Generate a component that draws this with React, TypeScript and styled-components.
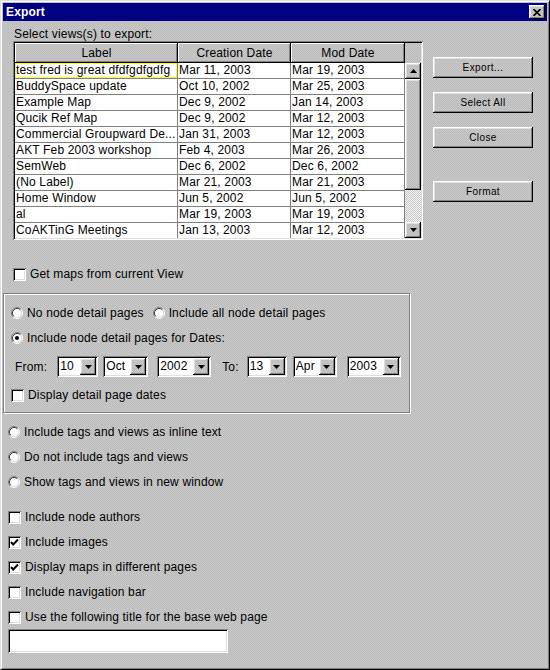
import React from "react";
import styled, { createGlobalStyle, css } from "styled-components";

const GlobalStyle = createGlobalStyle`
  html, body { margin: 0; padding: 0; background: #c0c0c0; }
  body { font-family: "Liberation Sans", Arial, sans-serif; font-size: 12px; color: #000; letter-spacing: 0.16px; }
  * { box-sizing: border-box; }
`;

const texture = css`
  background-color: #c3c3c3;
  background-image: repeating-conic-gradient(#c8c8c8 0 25%, #bcbcbc 0 50%);
  background-size: 2px 2px;
`;

const raised = css`
  box-shadow: inset -1px -1px 0 #000, inset 1px 1px 0 #fff, inset -2px -2px 0 #808080,
    inset 2px 2px 0 #dfdfdf;
`;

const sunken = css`
  box-shadow: inset 1px 1px 0 #808080, inset -1px -1px 0 #fff, inset 2px 2px 0 #000,
    inset -2px -2px 0 #dfdfdf;
`;

const Window = styled.div`
  width: 550px;
  height: 670px;
  display: flex;
  flex-direction: column;
  background: #c0c0c0;
  border: 1px solid;
  border-color: #dfdfdf #000 #000 #dfdfdf;
  box-shadow: inset 1px 1px 0 #fff, inset -1px -1px 0 #808080;
  padding: 2px;
  overflow: hidden;
`;

const TitleBar = styled.div`
  height: 18px;
  flex: none;
  background: #000080;
  color: #fff;
  font-weight: bold;
  font-size: 12px;
  display: flex;
  align-items: center;
  justify-content: space-between;
  padding: 0 2px 0 3px;
`;

const CloseButton = styled.div`
  width: 16px;
  height: 14px;
  ${texture};
  ${raised};
  display: flex;
  align-items: center;
  justify-content: center;
`;

const Body = styled.div`
  flex: 1;
  ${texture};
  display: flex;
  flex-direction: column;
  overflow: hidden;
`;

const TopArea = styled.div`
  display: flex;
  margin: 7px 0 0 10px;
`;

const LeftCol = styled.div`
  display: flex;
  flex-direction: column;
`;

const Caption = styled.div`
  height: 13px;
  line-height: 13px;
  margin-left: 1px;
  white-space: nowrap;
`;

const ScrollPane = styled.div`
  width: 410px;
  height: 199px;
  padding: 2px;
  ${sunken};
  display: grid;
  grid-template-columns: 390px 16px;
  grid-template-rows: 20px 175px;
`;

const HeaderRow = styled.div`
  display: flex;
`;

const HeaderCell = styled.div<{ $w: number }>`
  width: ${(p) => p.$w}px;
  height: 20px;
  ${texture};
  box-shadow: inset -1px -1px 0 #000, inset 1px 1px 0 #fff, inset -2px -2px 0 #808080;
  display: flex;
  align-items: center;
  justify-content: center;
  padding-bottom: 1px;
  white-space: nowrap;
`;

const Viewport = styled.div`
  grid-column: 1;
  grid-row: 2;
  background: #fff;
  overflow: hidden;
`;

const Row = styled.div`
  display: flex;
  height: 16px;
`;

const Cell = styled.div<{ $w: number; $focus?: boolean }>`
  width: ${(p) => p.$w}px;
  height: 16px;
  border-right: 1px solid #808080;
  border-bottom: 1px solid #808080;
  padding-left: 1px;
  line-height: 15px;
  white-space: nowrap;
  overflow: hidden;
  ${(p) => p.$focus && "box-shadow: inset 0 0 0 1px #ffff00;"}
`;

const ScrollBar = styled.div`
  grid-column: 2;
  grid-row: 2;
  display: flex;
  flex-direction: column;
`;

const ArrowButton = styled.div<{ $h?: number }>`
  width: 16px;
  height: ${(p) => p.$h ?? 16}px;
  flex: none;
  ${texture};
  ${raised};
  display: flex;
  align-items: center;
  justify-content: center;
`;

const Thumb = styled.div`
  height: 111px;
  flex: none;
  ${texture};
  ${raised};
`;

const Track = styled.div`
  flex: 1;
  background-color: #fff;
  background-image: repeating-conic-gradient(#c8c8c8 0 25%, #f4f4f4 0 50%);
  background-size: 2px 2px;
`;

const ButtonCol = styled.div`
  display: flex;
  flex-direction: column;
  margin-left: 10px;
  padding-top: 29px;
`;

const PushButton = styled.div<{ $mt: number }>`
  width: 100px;
  height: 21px;
  margin-top: ${(p) => p.$mt}px;
  ${texture};
  ${raised};
  display: flex;
  align-items: center;
  justify-content: center;
  font-size: 10px;
  letter-spacing: 0.4px;
  padding-bottom: 1px;
`;

const OptionRow = styled.div<{ $ml: number; $mt: number }>`
  display: flex;
  align-items: center;
  height: 16px;
  margin-left: ${(p) => p.$ml}px;
  margin-top: ${(p) => p.$mt}px;
  white-space: nowrap;
`;

const Option = styled.label<{ $ml?: number }>`
  display: flex;
  align-items: center;
  gap: 4px;
  margin-left: ${(p) => p.$ml ?? 0}px;
`;

const CheckBox = styled.span`
  width: 13px;
  height: 13px;
  flex: none;
  background: #fff;
  ${sunken};
  display: flex;
  align-items: center;
  justify-content: center;
`;

const GroupBox = styled.div`
  margin-top: 11px;
  width: 407px;
  height: 120px;
  flex: none;
  border: 1px solid #808080;
  box-shadow: 1px 1px 0 #fff, inset 1px 1px 0 #fff;
  padding: 11px 0 0 7px;
  display: flex;
  flex-direction: column;
`;

const DateRow = styled.div`
  display: flex;
  align-items: center;
  height: 21px;
  margin-top: 10px;
  white-space: nowrap;
`;

const DateLabel = styled.span<{ $ml: number }>`
  margin-left: ${(p) => p.$ml}px;
`;

const Combo = styled.div<{ $w: number; $ml: number }>`
  width: ${(p) => p.$w}px;
  height: 21px;
  margin-left: ${(p) => p.$ml}px;
  background: #fff;
  ${sunken};
  padding: 2px;
  display: flex;
`;

const ComboText = styled.span`
  flex: 1;
  line-height: 17px;
  padding-left: 1px;
`;

const TextField = styled.div`
  width: 220px;
  height: 24px;
  margin: 4px 0 0 5px;
  background: #fff;
  ${sunken};
`;

const Radio: React.FC<{ on?: boolean }> = ({ on }) => (
  <svg width="12" height="12" viewBox="0 0 12 12" style={{ flex: "none" }}>
    <circle cx="6" cy="6" r="4.5" fill="#fff" />
    <path d="M2.11 9.89 A5.5 5.5 0 0 1 9.89 2.11" stroke="#808080" fill="none" />
    <path d="M9.89 2.11 A5.5 5.5 0 0 1 2.11 9.89" stroke="#fff" fill="none" />
    <path d="M2.82 9.18 A4.5 4.5 0 0 1 9.18 2.82" stroke="#404040" fill="none" />
    <path d="M9.18 2.82 A4.5 4.5 0 0 1 2.82 9.18" stroke="#dfdfdf" fill="none" />
    {on && <circle cx="6" cy="6" r="2" fill="#000" />}
  </svg>
);

const Check: React.FC<{ on?: boolean }> = ({ on }) => (
  <CheckBox>
    {on && (
      <svg width="9" height="9" viewBox="0 0 9 9">
        <polyline points="1,4 3.2,6.5 8,1.5" stroke="#000" strokeWidth="1.9" fill="none" />
      </svg>
    )}
  </CheckBox>
);

const TriDown = () => (
  <svg width="7" height="4" viewBox="0 0 7 4">
    <polygon points="0,0 7,0 3.5,4" fill="#000" />
  </svg>
);

const TriUp = () => (
  <svg width="7" height="4" viewBox="0 0 7 4">
    <polygon points="0,4 7,4 3.5,0" fill="#000" />
  </svg>
);

const DateCombo: React.FC<{ value: string; w: number; ml: number }> = ({ value, w, ml }) => (
  <Combo $w={w} $ml={ml}>
    <ComboText>{value}</ComboText>
    <ArrowButton $h={17}>
      <TriDown />
    </ArrowButton>
  </Combo>
);

const rows: [string, string, string][] = [
  ["test fred is great dfdfgdfgdfg", "Mar 11, 2003", "Mar 19, 2003"],
  ["BuddySpace update", "Oct 10, 2002", "Mar 25, 2003"],
  ["Example Map", "Dec 9, 2002", "Jan 14, 2003"],
  ["Qucik Ref Map", "Dec 9, 2002", "Mar 12, 2003"],
  ["Commercial Groupward De...", "Jan 31, 2003", "Mar 12, 2003"],
  ["AKT Feb 2003 workshop", "Feb 4, 2003", "Mar 26, 2003"],
  ["SemWeb", "Dec 6, 2002", "Dec 6, 2002"],
  ["(No Label)", "Mar 21, 2003", "Mar 21, 2003"],
  ["Home Window", "Jun 5, 2002", "Jun 5, 2002"],
  ["al", "Mar 19, 2003", "Mar 19, 2003"],
  ["CoAKTinG Meetings", "Jan 13, 2003", "Mar 12, 2003"],
];

const colW = [163, 113, 114];

export default function App() {
  return (
    <>
      <GlobalStyle />
      <Window>
        <TitleBar>
          <span>Export</span>
          <CloseButton>
            <svg width="8" height="7" viewBox="0 0 8 7">
              <path d="M0.5 0 L7.5 7 M7.5 0 L0.5 7" stroke="#000" strokeWidth="1.6" />
            </svg>
          </CloseButton>
        </TitleBar>
        <Body>
          <TopArea>
            <LeftCol>
              <Caption>Select views(s) to export:</Caption>
              <ScrollPane>
                <HeaderRow>
                  <HeaderCell $w={colW[0]}>Label</HeaderCell>
                  <HeaderCell $w={colW[1]}>Creation Date</HeaderCell>
                  <HeaderCell $w={colW[2]}>Mod Date</HeaderCell>
                </HeaderRow>
                <div />
                <Viewport>
                  {rows.map((r, i) => (
                    <Row key={i}>
                      <Cell $w={colW[0]} $focus={i === 0}>{r[0]}</Cell>
                      <Cell $w={colW[1]}>{r[1]}</Cell>
                      <Cell $w={colW[2]}>{r[2]}</Cell>
                    </Row>
                  ))}
                </Viewport>
                <ScrollBar>
                  <ArrowButton>
                    <TriUp />
                  </ArrowButton>
                  <Thumb />
                  <Track />
                  <ArrowButton>
                    <TriDown />
                  </ArrowButton>
                </ScrollBar>
              </ScrollPane>
            </LeftCol>
            <ButtonCol>
              <PushButton $mt={0}>Export...</PushButton>
              <PushButton $mt={14}>Select All</PushButton>
              <PushButton $mt={14}>Close</PushButton>
              <PushButton $mt={33}>Format</PushButton>
            </ButtonCol>
          </TopArea>

          <OptionRow $ml={10} $mt={26}>
            <Option>
              <Check />
              Get maps from current View
            </Option>
          </OptionRow>

          <GroupBox>
            <OptionRow $ml={0} $mt={0}>
              <Option>
                <Radio />
                No node detail pages
              </Option>
              <Option $ml={9}>
                <Radio />
                Include all node detail pages
              </Option>
            </OptionRow>
            <OptionRow $ml={0} $mt={9}>
              <Option>
                <Radio on />
                Include node detail pages for Dates:
              </Option>
            </OptionRow>
            <DateRow>
              <DateLabel $ml={4}>From:</DateLabel>
              <DateCombo value="10" w={41} ml={10} />
              <DateCombo value="Oct" w={45} ml={5} />
              <DateCombo value="2002" w={54} ml={9} />
              <DateLabel $ml={11}>To:</DateLabel>
              <DateCombo value="13" w={40} ml={8} />
              <DateCombo value="Apr" w={44} ml={6} />
              <DateCombo value="2003" w={54} ml={10} />
            </DateRow>
            <OptionRow $ml={0} $mt={10}>
              <Option>
                <Check />
                Display detail page dates
              </Option>
            </OptionRow>
          </GroupBox>

          <OptionRow $ml={5} $mt={11}>
            <Option>
              <Radio />
              Include tags and views as inline text
            </Option>
          </OptionRow>
          <OptionRow $ml={5} $mt={9}>
            <Option>
              <Radio />
              Do not include tags and views
            </Option>
          </OptionRow>
          <OptionRow $ml={5} $mt={9}>
            <Option>
              <Radio />
              Show tags and views in new window
            </Option>
          </OptionRow>

          <OptionRow $ml={5} $mt={19}>
            <Option>
              <Check />
              Include node authors
            </Option>
          </OptionRow>
          <OptionRow $ml={5} $mt={9}>
            <Option>
              <Check on />
              Include images
            </Option>
          </OptionRow>
          <OptionRow $ml={5} $mt={9}>
            <Option>
              <Check on />
              Display maps in different pages
            </Option>
          </OptionRow>
          <OptionRow $ml={5} $mt={9}>
            <Option>
              <Check />
              Include navigation bar
            </Option>
          </OptionRow>
          <OptionRow $ml={5} $mt={9}>
            <Option>
              <Check />
              Use the following title for the base web page
            </Option>
          </OptionRow>
          <TextField />
        </Body>
      </Window>
    </>
  );
}
